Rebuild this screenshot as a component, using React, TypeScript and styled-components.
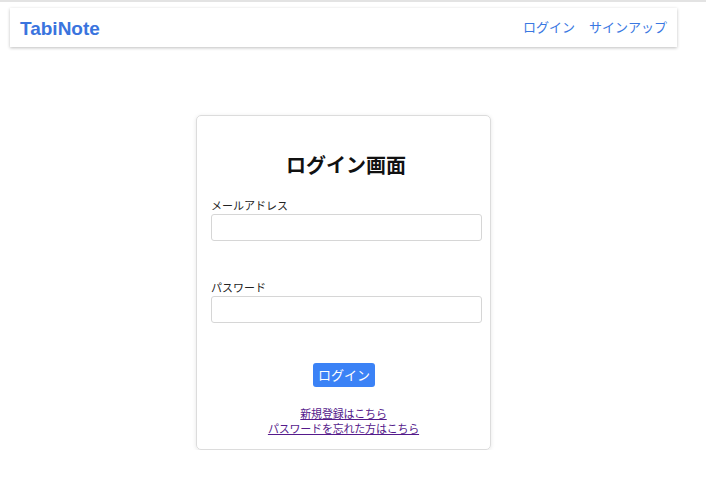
import styled, { createGlobalStyle } from "styled-components";

const GlobalStyle = createGlobalStyle`
  body {
    margin: 0;
    background: #ffffff;
    font-family: "Noto Sans CJK JP", "Noto Sans", sans-serif;
    border-top: 2px solid #e3e3e3;
  }
`;

const Page = styled.div`
  width: 687px;
  display: flex;
  flex-direction: column;
  align-items: center;
`;

const Header = styled.header`
  box-sizing: border-box;
  width: 667px;
  height: 39px;
  margin-top: 6px;
  padding: 0 10px;
  display: flex;
  align-items: center;
  justify-content: space-between;
  background: #ffffff;
  box-shadow: 0 1px 3px rgba(0, 0, 0, 0.25);
`;

const Logo = styled.div`
  font-family: "Liberation Sans", Arial, sans-serif;
  font-weight: 700;
  font-size: 19px;
  color: #3a74de;
  padding-top: 2px;
`;

const Nav = styled.nav`
  display: flex;
  gap: 14px;
  padding-bottom: 2px;
`;

const NavLink = styled.a`
  font-size: 13px;
  color: #3a78e2;
  text-decoration: none;
`;

const Card = styled.div`
  box-sizing: border-box;
  width: 295px;
  margin-top: 68px;
  padding: 35px 9px 13px 14px;
  border: 1px solid #dcdcdc;
  border-radius: 5px;
  box-shadow: 0 1px 4px rgba(0, 0, 0, 0.1);
  display: flex;
  flex-direction: column;
`;

const Title = styled.h1`
  margin: 0;
  font-size: 20px;
  line-height: 28px;
  font-weight: 700;
  text-align: center;
  color: #111;
`;

const Field = styled.div<{ $gap: number }>`
  margin-top: ${(p) => p.$gap}px;
  display: flex;
  flex-direction: column;
  gap: 1px;
`;

const Label = styled.label`
  font-size: 11px;
  line-height: 16px;
  color: #222;
`;

const Input = styled.input`
  box-sizing: border-box;
  width: 271px;
  height: 27px;
  margin: 0;
  border: 1px solid #d6d6d6;
  border-radius: 3px;
  outline: none;
`;

const Button = styled.button`
  align-self: center;
  margin: 40px 0 0 -4px;
  height: 24px;
  padding: 0 5px;
  border: none;
  border-radius: 3px;
  background: #3b82f6;
  color: #ffffff;
  font-family: "Noto Sans CJK JP", sans-serif;
  font-size: 13px;
  line-height: 24px;
`;

const Links = styled.div`
  margin: 19px 0 0 -5px;
  display: flex;
  flex-direction: column;
  align-items: center;
`;

const TextLink = styled.a`
  font-size: 11px;
  line-height: 15px;
  letter-spacing: -0.2px;
  color: #551a8b;
  text-decoration: underline;
`;

export default function App() {
  return (
    <>
      <GlobalStyle />
      <Page>
        <Header>
          <Logo>TabiNote</Logo>
          <Nav>
            <NavLink href="#">ログイン</NavLink>
            <NavLink href="#">サインアップ</NavLink>
          </Nav>
        </Header>

        <Card>
          <Title>ログイン画面</Title>
          <Field $gap={18}>
            <Label>メールアドレス</Label>
            <Input type="email" />
          </Field>
          <Field $gap={38}>
            <Label>パスワード</Label>
            <Input type="password" />
          </Field>
          <Button>ログイン</Button>
          <Links>
            <TextLink href="#">新規登録はこちら</TextLink>
            <TextLink href="#">パスワードを忘れた方はこちら</TextLink>
          </Links>
        </Card>
      </Page>
    </>
  );
}
